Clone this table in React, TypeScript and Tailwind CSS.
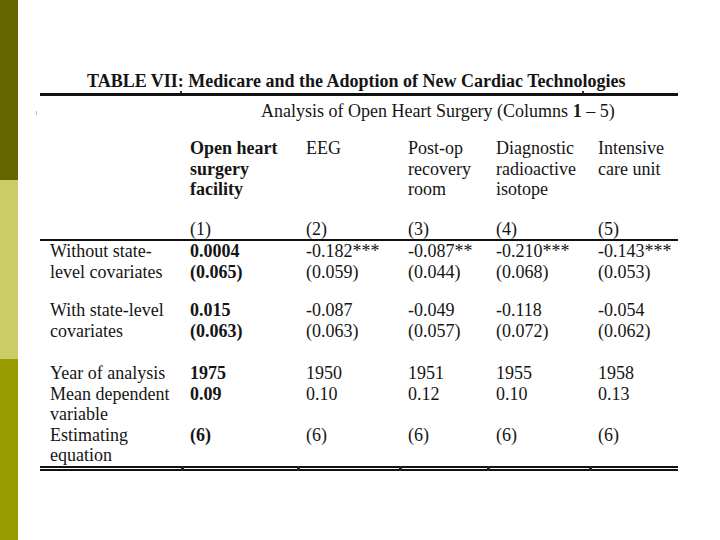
const serif = { fontFamily: '"Liberation Serif", "Times New Roman", serif' };

const cols = [
  { head: ["Open heart", "surgery", "facility"], bold: true },
  { head: ["EEG"] },
  { head: ["Post-op", "recovery", "room"] },
  { head: ["Diagnostic", "radioactive", "isotope"] },
  { head: ["Intensive", "care unit"] },
];

const rows: { label: string[]; vals: string[][]; gap?: string }[] = [
  {
    label: ["Without state-", "level covariates"],
    vals: [["0.0004", "(0.065)"], ["-0.182***", "(0.059)"], ["-0.087**", "(0.044)"], ["-0.210***", "(0.068)"], ["-0.143***", "(0.053)"]],
  },
  {
    label: ["With state-level", "covariates"],
    vals: [["0.015", "(0.063)"], ["-0.087", "(0.063)"], ["-0.049", "(0.057)"], ["-0.118", "(0.072)"], ["-0.054", "(0.062)"]],
    gap: "mt-[18px]",
  },
  {
    label: ["Year of analysis"],
    vals: [["1975"], ["1950"], ["1951"], ["1955"], ["1958"]],
    gap: "mt-[22px]",
  },
  {
    label: ["Mean dependent", "variable"],
    vals: [["0.09"], ["0.10"], ["0.12"], ["0.10"], ["0.13"]],
  },
  {
    label: ["Estimating", "equation"],
    vals: [["(6)"], ["(6)"], ["(6)"], ["(6)"], ["(6)"]],
  },
];

const grid = "grid grid-cols-[150px_116px_102px_88px_102px_80px]";

export default function App() {
  return (
    <div className="flex w-[720px] h-[540px] bg-white overflow-hidden" style={serif}>
      <div className="flex flex-col w-[18px] shrink-0">
        <div className="h-[180px] bg-[#666600]" />
        <div className="h-[179px] bg-[#cccc66]" />
        <div className="flex-1 bg-[#999900]" />
      </div>

      <div className="ml-[22px] w-[638px] text-[18px] leading-[20.5px] text-[#151515]">
        {/* Title */}
        <div className="mt-[71px] pl-[47px] font-bold whitespace-nowrap">
          TABLE VII: Medicare and the Adoption of New Cardiac Technologies
        </div>
        <div className="relative mt-[1px] h-[3px] bg-[#111]">
          <div className="absolute left-[140px] -top-[2px] w-[2px] h-[2px] bg-[#333]" />
          <div className="absolute left-[542px] -top-[2px] w-[2px] h-[2px] bg-[#333]" />
        </div>
        <div className="relative mt-[5px] pl-[221px] whitespace-nowrap">
          Analysis of Open Heart Surgery (Columns <span className="font-bold">1</span> – 5)
          <div className="absolute -left-[4px] top-[10px] w-[1px] h-[4px] bg-[#bbb]" />
        </div>

        {/* Column heads */}
        <div className={`${grid} mt-[17px]`}>
          <div />
          {cols.map((c, i) => (
            <div key={i} className={c.bold ? "font-bold" : ""}>
              {c.head.map((h) => (
                <div key={h} className="whitespace-nowrap">{h}</div>
              ))}
            </div>
          ))}
        </div>
        <div className={`${grid} mt-[19px]`}>
          <div />
          {cols.map((c, i) => (
            <div key={i}>({i + 1})</div>
          ))}
        </div>
        <div className="h-[2px] bg-[#111]" />

        {/* Body */}
        {rows.map((r, ri) => (
          <div key={ri} className={`${grid} ${r.gap ?? ""}`}>
            <div className="pl-[10px]">
              {r.label.map((l) => (
                <div key={l} className="whitespace-nowrap">{l}</div>
              ))}
            </div>
            {r.vals.map((v, vi) => (
              <div key={vi} className={vi === 0 ? "font-bold" : ""}>
                {v.map((t) => (
                  <div key={t} className="whitespace-nowrap">{t}</div>
                ))}
              </div>
            ))}
          </div>
        ))}

        {/* Double rule */}
        <div className="relative">
          <div className="h-[2px] bg-[#111]" />
          <div className="h-[1px]" />
          <div className="h-[2px] bg-[#111]" />
          {[141, 257, 359, 447, 549].map((x) => (
            <div key={x} className="absolute top-0 w-[3px] h-[5px] bg-[#222]" style={{ left: x }} />
          ))}
        </div>
      </div>
    </div>
  );
}
